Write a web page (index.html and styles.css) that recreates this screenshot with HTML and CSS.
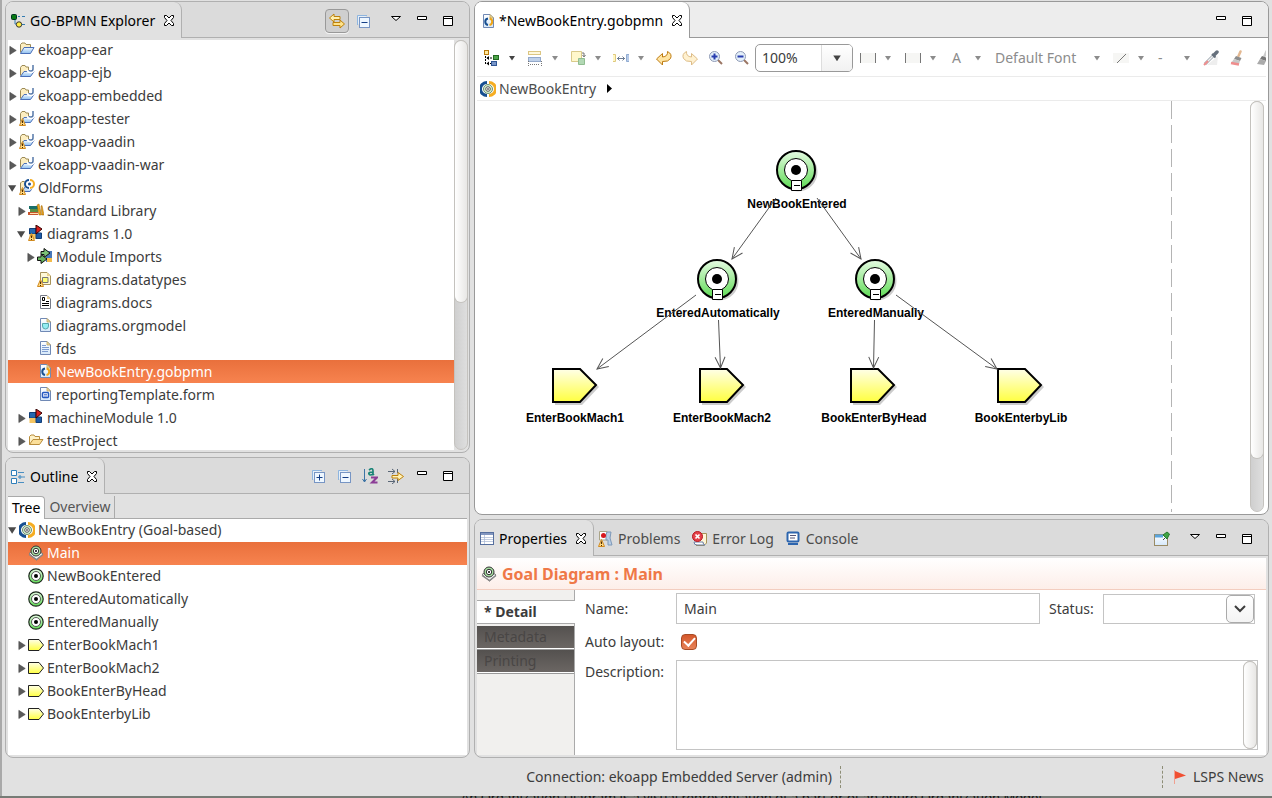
FILE: index.html
```html
<!DOCTYPE html>
<html lang="en">
<head>
<meta charset="utf-8">
<title>GO-BPMN Explorer</title>
<link rel="stylesheet" href="styles.css">
</head>
<body>
<svg class="sprite" aria-hidden="true">
  <defs>
    <linearGradient id="green" x1="0" y1="0" x2="0" y2="1"><stop offset="0" stop-color="#e6fbe3"/><stop offset="1" stop-color="#5fdb55"/></linearGradient>
    <linearGradient id="yellow" x1="0" y1="0" x2="0" y2="1"><stop offset="0" stop-color="#ffffe8"/><stop offset="1" stop-color="#ffff40"/></linearGradient>
    <linearGradient id="blue" x1="0" y1="0" x2="0" y2="1"><stop offset="0" stop-color="#eef7ff"/><stop offset="1" stop-color="#8fc0f0"/></linearGradient>
    <linearGradient id="sheet" x1="0" y1="0" x2="0" y2="1"><stop offset="0" stop-color="#fff"/><stop offset="1" stop-color="#d5e8fa"/></linearGradient>
  </defs>
  <symbol id="open" viewBox="0 0 12 16"><path d="M0 5H9L4.500 12Z" fill="#4a4a4a"/></symbol>
  <symbol id="closed" viewBox="0 0 12 16"><path d="M2 4V13L9 8.500Z" fill="#5a5a5a" stroke="#444" stroke-width=".6"/></symbol>
  <symbol id="folder" viewBox="0 0 16 16"><path d="M1.500 11.500V3.500L3 2H6L7 3.500H11.500V6" fill="#fdeec0" stroke="#9c8a55"/><path d="M1.500 12.500 5 6.500H15L11.500 12.500Z" fill="url(#blue)" stroke="#4a6fb8"/></symbol>
  <symbol id="folderj" viewBox="0 0 16 16"><path d="M1.500 11.500V3.500L3 1.500H6L7 3H9.500V7" fill="#fdeec0" stroke="#9c8a55"/><path d="M1.500 12.500 5 7.500H15L11.500 12.500Z" fill="url(#blue)" stroke="#4a6fb8"/><path d="M14 1V5Q14 7.500 11.500 7.500T9.500 6" fill="none" stroke="#fff" stroke-width="3.500"/><path d="M14 1V5Q14 7 12 7T10 6" fill="none" stroke="#5577a8" stroke-width="1.500"/></symbol>
  <symbol id="warn" viewBox="0 0 16 16"><path d="M3.500 8.500 6.500 15.500H.5Z" fill="#ffd982" stroke="#d08a20" stroke-linejoin="round"/><path d="M3.500 10.500V13M3.500 14V15" stroke="#4b2c00"/></symbol>
  <symbol id="folderw" viewBox="0 0 16 16"><use href="#folderj"/><use href="#warn"/></symbol>
  <symbol id="ring" viewBox="0 0 16 16"><path d="M7 1.500A6.500 6.500 0 0 0 7 14.500" fill="none" stroke="#174f91" stroke-width="3"/><path d="M9 1.500A6.500 6.500 0 0 1 9 14.500" fill="none" stroke="#f5ad22" stroke-width="3"/></symbol>
  <symbol id="project" viewBox="0 0 16 16"><path d="M1.500 12V4L3 2.500H7V12Z" fill="#fdeec0" stroke="#9c8a55"/><path d="M3 12.500 6 8H14L11 12.500Z" fill="#b8d8f5" stroke="#4a6fb8"/><circle cx="10.500" cy="5" r="5.500" fill="#fff"/><path d="M10 1A4 4 0 0 0 10 9" fill="none" stroke="#174f91" stroke-width="2"/><path d="M11 1A4 4 0 0 1 11 9" fill="none" stroke="#f5ad22" stroke-width="2"/><circle cx="10.500" cy="5" r="1.500" fill="#174f91"/><use href="#warn"/></symbol>
  <symbol id="books" viewBox="0 0 16 16"><path d="M1 4H10V7H1Z" fill="#19706a"/><path d="M2 7H10V10H2Z" fill="#5c8f43"/><path d="M0 10H10V13H0Z" fill="#c7552b"/><path d="M2 11.500H10" stroke="#ffe0b0"/><path d="M9 3 11 2 13.500 13H11ZM13 4 14 3.500 16 13H14Z" fill="#eca51f" stroke="#9c6206" stroke-width=".5"/></symbol>
  <symbol id="module" viewBox="0 0 16 16"><path d="M1.500 3.500H8V9H1.500Z" fill="#2467b0" stroke="#123e78"/><path d="M1.500 9H8V14H1.500Z" fill="#f5c561"/><path d="M8 8H13.500V13.500H8Z" fill="#1d5aa7" stroke="#123e78"/><path d="M8 0 14 4 8 9Z" fill="#d61f1f" stroke="#300"/></symbol>
  <symbol id="modulew" viewBox="0 0 16 16"><use href="#module"/><use href="#warn"/></symbol>
  <symbol id="imports" viewBox="0 0 16 16"><path d="M9 3H15V14H9Z" fill="#4777b8"/><path d="M10 10H15V14H10Z" fill="#f3bb4a"/><path d="M4 3.500H7V.5L13 5 7 9.500V6.500H4Z" fill="#7cc276" stroke="#111"/><path d="M.5 9H4V6.500L10 11 4 15.500V12.500H.5Z" fill="#66b35f" stroke="#111"/></symbol>
  <symbol id="page" viewBox="0 0 16 16"><path d="M3.500 1.500H10L13.500 5V14.500H3.500Z" fill="url(#sheet)" stroke="#7089b5"/><path d="M10 1.500V5H13.500Z" fill="#f5e0a0" stroke="#b29a5a" stroke-width=".7"/></symbol>
  <symbol id="datatypes" viewBox="0 0 16 16"><path d="M3.500 1.500H10L13.500 5V13.500H3.500Z" fill="#fff9d8" stroke="#a8935a"/><path d="M5.500 6.500H11V11.500H5.500Z" fill="#ffff74" stroke="#777"/><path d="M10 1.500V5H13.500Z" fill="#edd28c"/><use href="#warn"/></symbol>
  <symbol id="docs" viewBox="0 0 16 16"><path d="M3.500 1.500H10L13.500 5V14.500H3.500Z" fill="#fff" stroke="#777b87"/><path d="M5.500 3.500V6.500H7.500V3.500ZM9 7.500H12M5 9.500H12M5 11.500H12" fill="none" stroke="#000"/><path d="M10 1.500V5H13.500Z" fill="#edd28c"/></symbol>
  <symbol id="orgmodel" viewBox="0 0 16 16"><use href="#page"/><path d="M5.500 6.500H11.500V9Q11.500 12 8.500 12T5.500 9Z" fill="#93edf2" stroke="#56a7ad"/></symbol>
  <symbol id="text" viewBox="0 0 16 16"><use href="#page"/><path d="M5 5.500H9M5 7.500H12M5 9.500H12M5 11.500H11" stroke="#7d9cd0"/></symbol>
  <symbol id="gobpmn" viewBox="0 0 16 16"><use href="#page"/><path d="M8 5.500A3.300 3.300 0 0 0 8 12" fill="none" stroke="#174f91" stroke-width="2"/><path d="M9.500 5.500A3.300 3.300 0 0 1 9.500 12" fill="none" stroke="#f0a618" stroke-width="2"/></symbol>
  <symbol id="form" viewBox="0 0 16 16"><use href="#page"/><rect x="5.500" y="6.500" width="6" height="5" rx="1" fill="#fff" stroke="#2459c0" stroke-width="1.500"/><path d="M7 8.500H10M7 10H10" stroke="#2459c0" stroke-width=".7"/></symbol>
  <symbol id="plainfolder" viewBox="0 0 16 16"><path d="M1.500 12.500V4.500L3 3H6L7 4.500H11.500V7" fill="#fff2c8" stroke="#b98d3c"/><path d="M1.500 12.500 5 7.500H15L11.500 12.500Z" fill="#fbdf9a" stroke="#b98d3c"/></symbol>
  <symbol id="goalmodel" viewBox="0 0 16 16"><use href="#ring"/><circle cx="8" cy="8" r="4.500" fill="#d4efd0" stroke="#6f8f6f"/><circle cx="8" cy="8" r="2.300" fill="#fff" stroke="#555"/><circle cx="8" cy="8" r=".8"/></symbol>
  <symbol id="goal" viewBox="0 0 16 16"><circle cx="8" cy="8" r="7.200" fill="url(#green)" stroke="#1b281b" stroke-width="1.200"/><circle cx="8" cy="8" r="4.500" fill="#fff" stroke="#333" stroke-width=".8"/><circle cx="8" cy="8" r="2"/></symbol>
  <symbol id="task" viewBox="0 0 16 16"><path d="M.5 2.500H11L15.500 8 11 13.500H.5Z" fill="url(#yellow)" stroke="#222"/></symbol>
  <symbol id="goaldiagram" viewBox="0 0 16 16"><path d="M1 8.500 8 4 15 9 8.500 15Z" fill="#f6f6f6" stroke="#777"/><path d="M1 9.500 8.500 14.500 15 9.500" fill="none" stroke="#888" stroke-width="1.500"/><circle cx="8" cy="6" r="5" fill="#a7dfa2" stroke="#333"/><circle cx="8" cy="6" r="2.700" fill="#fff" stroke="#333"/><circle cx="8" cy="6" r="1"/></symbol>
  <symbol id="explorer" viewBox="0 0 16 16"><path d="M4 6V11H7M7 3.500H9M11 3.500H14M10 11.500H14" stroke="#347bb0" fill="none"/><rect x=".5" y="1.500" width="5" height="5" rx="1" fill="#087a14" stroke="#032"/><circle cx="8" cy="11.500" r="2.700" fill="#ffec45" stroke="#333"/></symbol>
  <symbol id="outline" viewBox="0 0 16 16"><path d="M.5 1.500H5.500V6.500H.5ZM.5 9.500H5.500V14.500H.5ZM8 7H10V9H8Z" fill="#fff" stroke="#2f7fba"/><path d="M7 3.500H13M11 8H14M7 13.500H13" stroke="#4a8fc2"/></symbol>
  <symbol id="close" viewBox="0 0 12 12"><path d="M1.500.5H3.500L6 3 8.500.5H10.500V2.500L8 5.500 10.500 8.500V10.500H8.500L6 8 3.500 10.500H1.500V8.500L4 5.500 1.500 2.500Z" fill="#fff" stroke="#000"/></symbol>
  <symbol id="link" viewBox="0 0 16 16"><path d="M.5 5 5 1V3.500H11V6.500H5V9Z" fill="#fff0b0" stroke="#bd810b"/><path d="M15.500 11 11 7V9.500H4V12.500H11V15Z" fill="#ffe38a" stroke="#bd810b"/></symbol>
  <symbol id="collapse" viewBox="0 0 16 16"><path d="M2.500 12V2.500H12" fill="#e7f0f8" stroke="#8eb5df"/><rect x="4.500" y="4.500" width="10" height="10" fill="#eef7ff" stroke="#7795c4"/><path d="M6.500 9.500H12.500" stroke="#153f86"/></symbol>
  <symbol id="expand" viewBox="0 0 16 16"><use href="#collapse"/><path d="M9.500 6.500V12.500" stroke="#153f86"/></symbol>
  <symbol id="menu" viewBox="0 0 16 16"><path d="M3.500 3.500H12.500L8 7.500Z" fill="#fff" stroke="#000"/></symbol>
  <symbol id="min" viewBox="0 0 16 16"><path d="M3.500 3.500H12.500V6.500H3.500Z" fill="#fff" stroke="#000"/></symbol>
  <symbol id="max" viewBox="0 0 16 16"><path d="M3.500 3.500H12.500V12.500H3.500ZM3.500 5.500H12.500" fill="#fff" stroke="#000"/></symbol>
  <symbol id="sort" viewBox="0 0 16 16"><path d="M2.500 1V14M.5 11 2.500 14 4.500 11" fill="none" stroke="#3d74a5"/><path d="M7 2Q11-1 11 3V7M11 4Q6 4 7 6T11 6L12 7" fill="none" stroke="#188476" stroke-width="1.700"/><path d="M9 9.500H15L10 14.500H15.500" fill="none" stroke="#8c3d97" stroke-width="2"/></symbol>
  <symbol id="filter" viewBox="0 0 16 16"><path d="M0 3.500H7M4 1 7 3.500 4 6M9.500 1V5M0 13.500H7M4 11 7 13.500 4 16M9.500 11V15" fill="none" stroke="#596676"/><path d="M4 7.500H10V4.500L15.500 8.500 10 12.500V10H4Z" fill="#fff3b8" stroke="#bd810b"/></symbol>
  <symbol id="drop" viewBox="0 0 8 8"><path d="M1 2H7L4 6.500Z" fill="currentColor"/></symbol>
  <symbol id="layout" viewBox="0 0 16 16"><rect x=".5" y=".5" width="4" height="4" fill="#ffe9a0" stroke="#b97a0b"/><path d="M1.500 6V15M3 8H9M3 13.500H7" stroke="#000" stroke-dasharray="2 1"/><path d="M5 6 2.500 8 5 10ZM5 11.500 2.500 13.500 5 15.500Z"/><rect x="9.500" y="5.500" width="5" height="4" fill="#4ca449" stroke="#21681f"/><rect x="7.500" y="11.500" width="5" height="4" fill="#7895c8" stroke="#315694"/></symbol>
  <symbol id="align" viewBox="0 0 16 16"><rect x="1.500" y="1.500" width="12" height="3" fill="#fff8dc" stroke="#dcc682"/><rect x="1.500" y="7.500" width="12" height="4" fill="#bfd1ea" stroke="#94a9ca"/><path d="M1.500 11V16M14.500 11V16M3 14.500H13" stroke="#777" stroke-dasharray="1 1"/></symbol>
  <symbol id="arrange" viewBox="0 0 16 16"><path d="M1.500 1.500H11.500V11.500H1.500Z" fill="#fff8cc" stroke="#d9ca8b"/><path d="M12 3H14V6M12.500 5 14 7 15.500 5" fill="none" stroke="#777"/><path d="M8.500 8.500H14.500V14.500H8.500Z" fill="#b2d8b4" stroke="#90bd91"/></symbol>
  <symbol id="space" viewBox="0 0 16 16"><path d="M0 4.500H2.500V11.500H0" fill="#fff6c5" stroke="#dfca7d"/><path d="M16 4.500H13.500V11.500H16" fill="#b6cae8" stroke="#91acd2"/><path d="M4 8.500H12M6.500 6.500 4.500 8.500 6.500 10.500M9.500 6.500 11.500 8.500 9.500 10.500" fill="none" stroke="#6c7c93"/></symbol>
  <symbol id="undo" viewBox="0 0 16 16"><path d="M.5 9 6.500 3.500V7Q12 6.500 11.500 1.500 16.500 4 14.500 8.500 12.500 12 6.500 11.500V15Z" fill="#ffe5a3" stroke="#bd7b12"/></symbol>
  <symbol id="zoomin" viewBox="0 0 16 16"><path d="M10 10 14 14" stroke="#9b7664" stroke-width="2"/><circle cx="6.500" cy="6.500" r="5" fill="#e3effa" stroke="#8f9ab5"/><path d="M3.500 6.500H9.500M6.500 3.500V9.500" stroke="#273cae" stroke-width="2"/></symbol>
  <symbol id="zoomout" viewBox="0 0 16 16"><path d="M10 10 14 14" stroke="#9b7664" stroke-width="2"/><circle cx="6.500" cy="6.500" r="5" fill="#e3effa" stroke="#8f9ab5"/><path d="M3.500 6.500H9.500" stroke="#273cae" stroke-width="2"/></symbol>
  <symbol id="fill" viewBox="0 0 16 16"><path d="M0 3H16V13H0Z" fill="#f6f6f4"/><path d="M.5 3V13M15.500 3V13" stroke="#777"/></symbol>
  <symbol id="line" viewBox="0 0 16 16"><path d="M0 3H16V13H0Z" fill="#f6f6f4"/><path d="M4 13 13 4" stroke="#777"/></symbol>
  <symbol id="pipette" viewBox="0 0 16 16"><path d="M4 15H14L15 6Z" fill="#eee"/><path d="M2 14 10 6" stroke="#98a3ac" stroke-width="3"/><path d="M2 14 10 6" stroke="#f2f2f2" stroke-width="1.500"/><path d="M1 15 5 11" stroke="#ef8d8d" stroke-width="2"/><path d="M9 4 12.500 7.500" stroke="#66707c" stroke-width="2"/><path d="M11 5 14 2" stroke="#66707c" stroke-width="3.500" stroke-linecap="round"/></symbol>
  <symbol id="brush" viewBox="0 0 16 16"><path d="M9.500 6 11.500 1.500" stroke="#e3b891" stroke-width="2.500" stroke-linecap="round"/><path d="M7 6 12.500 8 11 11 5 9Z" fill="#8d8d8d"/><path d="M5 9 11 11 10 14 2 13Z" fill="#c8c8c8"/><path d="M2 13 10 14.500" stroke="#ef8d8d" stroke-width="2.500"/></symbol>
  <symbol id="graybrush" viewBox="0 0 16 16"><path d="M9.500 6 11.500 1.500" stroke="#ccc" stroke-width="2.500" stroke-linecap="round"/><path d="M7 6 12.500 8 11 11 5 9Z" fill="#777"/><path d="M5 9 11 11 9 15 2 14Z" fill="#aaa"/></symbol>
  <symbol id="properties" viewBox="0 0 16 16"><rect x=".5" y="1.500" width="13" height="12" fill="#fff" stroke="#566f9e"/><path d="M1 3H13" stroke="#8296bf" stroke-width="2"/><path d="M4.500 4V13M1 6.500H13M1 8.500H13M1 10.500H13" stroke="#a8b7d4" stroke-width=".7"/></symbol>
  <symbol id="problems" viewBox="0 0 16 16"><path d="M1.500.5H9V9H1.500Z" fill="#fff" stroke="#aaa487"/><path d="M9 1H13L12 7 14 14H10V9H8V4Z" fill="#b9cee5" stroke="#7d98b8"/><circle cx="5.500" cy="4.500" r="2.500" fill="#d71920"/><use href="#warn"/></symbol>
  <symbol id="errorlog" viewBox="0 0 16 16"><path d="M5.500 2.500H14.500V12L12 14.500H4" fill="#fff6d7" stroke="#a69357"/><path d="M5 14Q2 14 2 11H11Q11 14 13 14Z" fill="#fff" stroke="#6b7fa3"/><circle cx="5.500" cy="5.500" r="5" fill="#e34149" stroke="#b5171f"/><path d="M3.500 3.500 7.500 7.500M7.500 3.500 3.500 7.500" stroke="#fff" stroke-width="1.700"/></symbol>
  <symbol id="console" viewBox="0 0 16 16"><rect x="1.500" y="1.500" width="11" height="9" rx="1" fill="#fff" stroke="#2d65ae" stroke-width="2"/><path d="M4 4.500H10M4 7H9" stroke="#557"/><path d="M2 13H12" stroke="#2d65ae" stroke-width="2"/></symbol>
  <symbol id="pin" viewBox="0 0 16 16"><rect x=".5" y="3.500" width="13" height="11" fill="url(#sheet)" stroke="#9a8b65"/><path d="M1 5H9" stroke="#5aa4dc" stroke-width="3"/><path d="M9 9 12 6" stroke="#444"/><path d="M9 4 13 1 15.500 3 13 8Z" fill="#3fa345" stroke="#267a2d"/></symbol>
  <symbol id="flag" viewBox="0 0 16 16"><path d="M2.500 1V15" stroke="#f0a090"/><path d="M3 2 14 6.500 3 10Z" fill="#f04f32"/></symbol>
</svg>

<div class="workbench">
  <main class="workspace">
    <div class="column">
      <section class="panel explorer">
        <header class="tabbar">
          <div class="tab active"><svg class="icon"><use href="#explorer"/></svg><span>GO-BPMN Explorer</span><button class="close" aria-label="Close"><svg><use href="#close"/></svg></button></div>
          <div class="actions">
            <button class="tool pressed" aria-label="Link with editor"><svg class="icon"><use href="#link"/></svg></button>
            <button class="tool" aria-label="Collapse all"><svg class="icon"><use href="#collapse"/></svg></button>
            <button class="tool menu" aria-label="View menu"><svg class="icon"><use href="#menu"/></svg></button>
            <button class="tool" aria-label="Minimize"><svg class="icon"><use href="#min"/></svg></button>
            <button class="tool" aria-label="Maximize"><svg class="icon"><use href="#max"/></svg></button>
          </div>
        </header>
        <div class="scroll-area">
          <ul class="tree clipped">
            <li><svg class="twisty"><use href="#closed"/></svg><svg class="icon"><use href="#folder"/></svg>ekoapp-ear</li>
            <li><svg class="twisty"><use href="#closed"/></svg><svg class="icon"><use href="#folderj"/></svg>ekoapp-ejb</li>
            <li><svg class="twisty"><use href="#closed"/></svg><svg class="icon"><use href="#folderj"/></svg>ekoapp-embedded</li>
            <li><svg class="twisty"><use href="#closed"/></svg><svg class="icon"><use href="#folderw"/></svg>ekoapp-tester</li>
            <li><svg class="twisty"><use href="#closed"/></svg><svg class="icon"><use href="#folderw"/></svg>ekoapp-vaadin</li>
            <li><svg class="twisty"><use href="#closed"/></svg><svg class="icon"><use href="#folderj"/></svg>ekoapp-vaadin-war</li>
            <li><svg class="twisty"><use href="#open"/></svg><svg class="icon"><use href="#project"/></svg>OldForms</li>
            <li class="level-1"><svg class="twisty"><use href="#closed"/></svg><svg class="icon"><use href="#books"/></svg>Standard Library</li>
            <li class="level-1"><svg class="twisty"><use href="#open"/></svg><svg class="icon"><use href="#modulew"/></svg>diagrams 1.0</li>
            <li class="level-2"><svg class="twisty"><use href="#closed"/></svg><svg class="icon"><use href="#imports"/></svg>Module Imports</li>
            <li class="level-2"><svg class="twisty"></svg><svg class="icon"><use href="#datatypes"/></svg>diagrams.datatypes</li>
            <li class="level-2"><svg class="twisty"></svg><svg class="icon"><use href="#docs"/></svg>diagrams.docs</li>
            <li class="level-2"><svg class="twisty"></svg><svg class="icon"><use href="#orgmodel"/></svg>diagrams.orgmodel</li>
            <li class="level-2"><svg class="twisty"></svg><svg class="icon"><use href="#text"/></svg>fds</li>
            <li class="level-2 selected"><svg class="twisty"></svg><svg class="icon"><use href="#gobpmn"/></svg>NewBookEntry.gobpmn</li>
            <li class="level-2"><svg class="twisty"></svg><svg class="icon"><use href="#form"/></svg>reportingTemplate.form</li>
            <li class="level-1"><svg class="twisty"><use href="#closed"/></svg><svg class="icon"><use href="#module"/></svg>machineModule 1.0</li>
            <li class="level-1"><svg class="twisty"><use href="#closed"/></svg><svg class="icon"><use href="#plainfolder"/></svg>testProject</li>
          </ul>
          <div class="scrollbar"><div class="thumb" style="height:64%"></div></div>
        </div>
      </section>

      <section class="panel outline">
        <header class="tabbar">
          <div class="tab active"><svg class="icon"><use href="#outline"/></svg><span>Outline</span><button class="close" aria-label="Close"><svg><use href="#close"/></svg></button></div>
          <div class="actions">
            <button class="tool" aria-label="Expand all"><svg class="icon"><use href="#expand"/></svg></button>
            <button class="tool" aria-label="Collapse all"><svg class="icon"><use href="#collapse"/></svg></button>
            <button class="tool" aria-label="Sort"><svg class="icon"><use href="#sort"/></svg></button>
            <button class="tool" aria-label="Link"><svg class="icon"><use href="#filter"/></svg></button>
            <button class="tool" aria-label="Minimize"><svg class="icon"><use href="#min"/></svg></button>
            <button class="tool" aria-label="Maximize"><svg class="icon"><use href="#max"/></svg></button>
          </div>
        </header>
        <nav class="subtabs"><button class="subtab current">Tree</button><button class="subtab">Overview</button></nav>
        <ul class="tree">
          <li><svg class="twisty"><use href="#open"/></svg><svg class="icon"><use href="#goalmodel"/></svg>NewBookEntry (Goal-based)</li>
          <li class="level-1 selected"><svg class="twisty"></svg><svg class="icon"><use href="#goaldiagram"/></svg>Main</li>
          <li class="level-1"><svg class="twisty"></svg><svg class="icon"><use href="#goal"/></svg>NewBookEntered</li>
          <li class="level-1"><svg class="twisty"></svg><svg class="icon"><use href="#goal"/></svg>EnteredAutomatically</li>
          <li class="level-1"><svg class="twisty"></svg><svg class="icon"><use href="#goal"/></svg>EnteredManually</li>
          <li class="level-1"><svg class="twisty"><use href="#closed"/></svg><svg class="icon"><use href="#task"/></svg>EnterBookMach1</li>
          <li class="level-1"><svg class="twisty"><use href="#closed"/></svg><svg class="icon"><use href="#task"/></svg>EnterBookMach2</li>
          <li class="level-1"><svg class="twisty"><use href="#closed"/></svg><svg class="icon"><use href="#task"/></svg>BookEnterByHead</li>
          <li class="level-1"><svg class="twisty"><use href="#closed"/></svg><svg class="icon"><use href="#task"/></svg>BookEnterbyLib</li>
        </ul>
      </section>
    </div>

    <div class="column">
      <section class="panel editor">
        <header class="tabbar">
          <div class="tab active"><svg class="icon"><use href="#gobpmn"/></svg><span>*NewBookEntry.gobpmn</span><button class="close" aria-label="Close"><svg><use href="#close"/></svg></button></div>
          <div class="actions">
            <button class="tool" aria-label="Minimize"><svg class="icon"><use href="#min"/></svg></button>
            <button class="tool" aria-label="Maximize"><svg class="icon"><use href="#max"/></svg></button>
          </div>
        </header>
        <div class="toolbar">
          <button class="tool split dark" aria-label="Layout"><svg class="icon"><use href="#layout"/></svg><svg class="drop"><use href="#drop"/></svg></button>
          <button class="tool split" aria-label="Align"><svg class="icon"><use href="#align"/></svg><svg class="drop"><use href="#drop"/></svg></button>
          <button class="tool split" aria-label="Arrange"><svg class="icon"><use href="#arrange"/></svg><svg class="drop"><use href="#drop"/></svg></button>
          <button class="tool split" aria-label="Spacing"><svg class="icon"><use href="#space"/></svg><svg class="drop"><use href="#drop"/></svg></button>
          <div class="button-row">
            <button class="tool" aria-label="Undo"><svg class="icon"><use href="#undo"/></svg></button>
            <button class="tool redo" aria-label="Redo"><svg class="icon"><use href="#undo"/></svg></button>
            <button class="tool" aria-label="Zoom in"><svg class="icon"><use href="#zoomin"/></svg></button>
            <button class="tool" aria-label="Zoom out"><svg class="icon"><use href="#zoomout"/></svg></button>
          </div>
          <div class="zoom"><select aria-label="Zoom level"><option>100%</option></select><span class="zoom-arrow"><svg><use href="#drop"/></svg></span></div>
          <button class="tool format" aria-label="Fill colour"><svg class="icon"><use href="#fill"/></svg><svg class="drop"><use href="#drop"/></svg></button>
          <button class="tool format" aria-label="Line colour"><svg class="icon"><use href="#fill"/></svg><svg class="drop"><use href="#drop"/></svg></button>
          <button class="tool format letter"><span>A</span><svg class="drop"><use href="#drop"/></svg></button>
          <button class="tool format font"><span>Default Font</span><svg class="drop"><use href="#drop"/></svg></button>
          <button class="tool format" aria-label="Line style"><svg class="icon"><use href="#line"/></svg><svg class="drop"><use href="#drop"/></svg></button>
          <button class="tool format width"><span>-</span><svg class="drop"><use href="#drop"/></svg></button>
          <div class="button-row">
            <button class="tool" aria-label="Pick format"><svg class="icon"><use href="#pipette"/></svg></button>
            <button class="tool" aria-label="Apply format"><svg class="icon"><use href="#brush"/></svg></button>
            <button class="tool" aria-label="Apply default format"><svg class="icon"><use href="#graybrush"/></svg></button>
          </div>
        </div>
        <nav class="breadcrumb"><svg class="icon"><use href="#goalmodel"/></svg><a href="#">NewBookEntry</a><svg class="crumb"><path d="M1 0V9L6 4.500Z"/></svg></nav>
        <div class="scroll-area">
          <svg class="canvas" role="img" aria-label="Goal diagram Main">
            <defs>
              <marker id="head" orient="auto" markerUnits="userSpaceOnUse" markerWidth="12" markerHeight="12" overflow="visible"><path d="M-11-5L0 0L-11 5" class="edge"/></marker>
              <g id="goal-node"><circle cx="2" cy="2" r="19.500" fill="#ccc"/><circle r="19" fill="url(#green)" stroke="#000" stroke-width="2"/><circle r="11.500" fill="#fff" stroke="#000"/><circle r="5"/><path d="M-4.500 10.500H5.500V20.500H-4.500Z" fill="#fff" stroke="#000"/><path d="M-2 15.500H4" stroke="#000"/></g>
              <g id="task-node"><path d="M3 3H30L47 19 30 37H3Z" fill="#ccc"/><path d="M1 1H28L44 17 28 34H1Z" fill="url(#yellow)" stroke="#000" stroke-width="2"/></g>
            </defs>
            <path d="M694.500 0V412" stroke="#b4b4b4" stroke-dasharray="18 6"/>
            <g transform="translate(-477 -101)">
              <use href="#goal-node" x="796" y="170"/><use href="#goal-node" x="717" y="279"/><use href="#goal-node" x="875" y="279"/>
              <use href="#task-node" x="552" y="368"/><use href="#task-node" x="699" y="368"/><use href="#task-node" x="850" y="368"/><use href="#task-node" x="997" y="368"/>
              <g class="node-label">
                <text x="797" y="208">NewBookEntered</text><text x="718" y="317">EnteredAutomatically</text><text x="876" y="317">EnteredManually</text>
                <text x="575" y="422">EnterBookMach1</text><text x="722" y="422">EnterBookMach2</text><text x="874" y="422">BookEnterByHead</text><text x="1021" y="422">BookEnterbyLib</text>
              </g>
              <g class="edge">
                <path marker-end="url(#head)" d="M776 198L732 259"/><path marker-end="url(#head)" d="M817 198L861 259"/><path marker-end="url(#head)" d="M696 295L597 369"/><path marker-end="url(#head)" d="M718.500 320L720.500 368"/><path marker-end="url(#head)" d="M874.500 320L873.500 368"/><path marker-end="url(#head)" d="M896 295L997 369"/>
              </g>
            </g>
          </svg>
          <div class="scrollbar"><div class="thumb" style="height:87%"></div></div>
        </div>
      </section>

      <section class="panel properties">
        <header class="tabbar">
          <div class="tab active"><svg class="icon"><use href="#properties"/></svg><span>Properties</span><button class="close" aria-label="Close"><svg><use href="#close"/></svg></button></div>
          <div class="actions">
            <div class="tab-list">
              <button class="tab"><svg class="icon"><use href="#problems"/></svg>Problems</button>
              <button class="tab"><svg class="icon"><use href="#errorlog"/></svg>Error Log</button>
              <button class="tab"><svg class="icon"><use href="#console"/></svg>Console</button>
            </div>
            <button class="tool" aria-label="Pin"><svg class="icon"><use href="#pin"/></svg></button>
            <button class="tool menu" aria-label="View menu"><svg class="icon"><use href="#menu"/></svg></button>
            <button class="tool" aria-label="Minimize"><svg class="icon"><use href="#min"/></svg></button>
            <button class="tool" aria-label="Maximize"><svg class="icon"><use href="#max"/></svg></button>
          </div>
        </header>
        <h1 class="title"><svg class="icon"><use href="#goaldiagram"/></svg>Goal Diagram : Main</h1>
        <div class="sheet">
          <nav class="sections">
            <button class="section current">* Detail</button>
            <button class="section">Metadata</button>
            <button class="section">Printing</button>
          </nav>
          <form class="form">
            <label for="name">Name:</label><input id="name" type="text" value="Main">
            <label for="status">Status:</label>
            <div class="status-field"><select id="status"><option></option></select><span class="status-arrow"><svg><path d="M2 2L7 7L12 2"/></svg></span></div>
            <label for="auto">Auto layout:</label><input class="check" id="auto" type="checkbox" checked>
            <label class="top" for="desc">Description:</label>
            <div class="area"><textarea id="desc"></textarea><div class="scrollbar"><div class="thumb" style="height:100%"></div></div></div>
          </form>
        </div>
      </section>
    </div>
  </main>
  <footer class="statusbar">
    <span class="connection">Connection: ekoapp Embedded Server (admin)</span>
    <span class="news"><svg class="icon"><use href="#flag"/></svg>LSPS News</span>
  </footer>
</div>
<div class="behind">An Organization Diagram is a visual representation of a part or of an entire Organization Model</div>
</body>
</html>
```

FILE: styles.css
```css
* { box-sizing: border-box; }
body {
  margin: 0;
  min-height: 100vh;
  display: flex;
  flex-direction: column;
  background: #e1e1e1;
  color: #3c3c3c;
  font: 14px/22px "Noto Sans", "Open Sans", sans-serif;
  overflow: hidden;
}
button, input, select, textarea { font: inherit; color: inherit; margin: 0; }
button { border: 0; padding: 0; background: none; display: flex; align-items: center; }
svg { display: block; flex: none; }
.sprite { position: absolute; width: 0; height: 0; }
.icon { width: 16px; height: 16px; }

.workbench { flex: 1; display: flex; flex-direction: column; border-left: 2px solid #a9a9a9; }
.workspace { flex: 1; display: grid; grid-template-columns: 31fr 53fr; gap: 4px; padding: 1px 3px 0; }
.column { display: flex; flex-direction: column; gap: 4px; min-width: 0; }

.panel {
  display: flex;
  flex-direction: column;
  min-height: 0;
  overflow: hidden;
  border: 1px solid #b0b0b0;
  border-radius: 8px;
}
.explorer { flex: 452 1 0; }
.outline { flex: 301 1 0; }
.editor { flex: 515 1 0; background: #fff; border-color: #999; }
.properties { flex: 238 1 0; }

.tabbar { display: flex; flex: none; height: 36px; background: #dbdbdb; }
.tab { display: flex; align-items: center; gap: 4px; color: #4c4c4c; white-space: nowrap; }
.tab.active {
  gap: 3px;
  padding: 2px 6px 0 5px;
  color: #000;
  background: #e1e1e1;
  border-right: 1px solid #b0b0b0;
  border-top-right-radius: 8px;
}
.close { margin-left: 5px; }
.close svg { width: 12px; height: 12px; }
.actions {
  flex: 1;
  display: flex;
  align-items: center;
  justify-content: flex-end;
  gap: 10px;
  padding: 2px 13px 0 0;
  border-bottom: 1px solid #b0b0b0;
}
.menu { margin-left: 7px; }
.pressed { padding: 3px; margin-right: -4px; border: 1px solid #999; border-radius: 4px; background: #cfcfcf; box-shadow: 0 1px 0 #f4f4f4; }
.editor .tabbar { background: #ededed; }
.editor .tab.active { background: #fff; border-color: #999; }
.editor .actions { border-color: #999; }
.tab-list { display: flex; gap: 12px; margin-right: auto; padding-left: 4px; }

.scroll-area { flex: 1; display: flex; min-height: 0; margin: 2px 1px 2px 2px; }
.tree { list-style: none; margin: 0; padding: 0; background: #fff; flex: 1; min-width: 0; overflow: hidden; }
.tree li { display: flex; align-items: center; height: 23px; white-space: nowrap; }
.tree .icon { margin: 0 3px 1px 0; }
.clipped li:first-child { margin-top: -2px; }
.outline .tree { margin: 0 2px 2px; }
.twisty { width: 11px; height: 16px; }
.tree .level-1 { padding-left: 9px; }
.tree .level-2 { padding-left: 18px; }
.tree .selected { color: #fff; background: linear-gradient(#e9703c, #f7834f); }

.scrollbar { flex: none; width: 14px; border: 1px solid #c4c2be; border-radius: 7px; background: linear-gradient(90deg, #cfcfcf, #dedede); }
.thumb { border-radius: 7px; background: linear-gradient(90deg, #fff, #e8e7e5); box-shadow: 0 0 0 1px #c4c2be; }

.subtabs { display: flex; height: 23px; margin: 2px 2px 0; border-bottom: 1px solid #aaa; }
.subtab { padding: 0 4px; border-right: 1px solid #aaa; color: #555; }
.current.subtab { background: #fff; color: #000; border-top: 1px solid #aaa; height: 23px; border-top-right-radius: 4px; }

.toolbar { flex: none; display: flex; align-items: center; height: 39px; margin: 0 2px; padding: 1px 0 0 7px; border-bottom: 1px solid #ebebeb; overflow: hidden; color: #8c8c8c; }
.toolbar > * { flex: none; }
.drop { width: 8px; height: 8px; }
.split { width: 43px; gap: 8px; }
.dark .drop { color: #444; }
.button-row { display: flex; gap: 10px; }
.redo { transform: scaleX(-1); opacity: 0.5; }
.zoom { position: relative; width: 98px; height: 28px; margin: 0 7px 0 5px; }
.zoom select { appearance: none; width: 100%; height: 100%; padding: 0 6px; border: 1px solid #999; border-radius: 5px; background: #fff; color: #3c3c3c; }
.zoom-arrow { position: absolute; inset: 1px 1px 1px auto; width: 31px; display: flex; align-items: center; justify-content: center; border-left: 1px solid #ddd; border-radius: 0 4px 4px 0; background: linear-gradient(#fff, #f1f1f1); color: #444; pointer-events: none; }
.zoom-arrow svg { width: 10px; height: 10px; }
.format { width: 45px; gap: 8px; }
.letter { width: 45px; padding-left: 2px; gap: 13px; }
.font { width: 118px; gap: 17px; }
.width { gap: 20px; }

.breadcrumb { flex: none; display: flex; align-items: center; gap: 3px; height: 24px; margin: 0 2px; padding-left: 3px; border-bottom: 1px solid #ebebeb; }
.breadcrumb a { color: #4c4c4c; text-decoration: none; }
.crumb { width: 8px; height: 9px; margin-left: 7px; }
.editor .scroll-area { margin: 0 4px 2px 2px; }
.canvas { flex: 1; width: 0; height: auto; align-self: stretch; }
.edge { fill: none; stroke: #555; stroke-width: 1px; }
.node-label { font: bold 12px "Liberation Sans", Arial, sans-serif; text-anchor: middle; fill: #000; }

.title { flex: none; display: flex; align-items: center; gap: 5px; height: 32px; margin: 2px 2px 0; padding-left: 4px; border-bottom: 1px solid #f3cdbf; background: linear-gradient(#fff, #fdeee9); color: #ef7847; font-size: 16px; }
.sheet { flex: 1; display: flex; margin: 0 2px 2px; background: #fff; min-height: 0; }
.sections { flex: none; width: 98px; padding-top: 10px; background: #f1f0ee; border-right: 1px solid #aaa; }
.section { width: 97px; height: 22px; margin-bottom: 2px; padding-left: 7px; color: #494645; background: linear-gradient(#54514f, #6b6663); box-shadow: 0 1px 0 #fff, 0 2px 0 #999; }
.current.section { width: 98px; height: 24px; color: #3c3c3c; background: #fff; font-weight: bold; box-shadow: none; border: solid #aaa; border-width: 1px 0; }

.form { flex: 1; display: grid; grid-template-columns: 82px 1fr 48px 152px; grid-template-rows: 31px 36px 1fr; column-gap: 9px; align-items: center; padding: 3px 8px 5px 10px; min-width: 0; }
.form input[type="text"] { width: 100%; height: 31px; padding: 0 7px; border: 1px solid #c4c4c4; background: #fff; }
.status-field { position: relative; height: 30px; margin-right: 3px; margin-left: -3px; }
.status-field select { appearance: none; width: 100%; height: 100%; border: 1px solid #c4c4c4; border-radius: 0; background: #fff; }
.status-arrow { position: absolute; inset: 1px 1px 1px auto; width: 28px; display: flex; align-items: center; justify-content: center; border: 1px solid #aaa; border-radius: 5px; background: linear-gradient(#fff, #f4f4f4); pointer-events: none; }
.status-arrow svg { width: 14px; height: 9px; fill: none; stroke: #3c3c3c; stroke-width: 2px; }
.check { appearance: none; width: 16px; height: 16px; margin-left: 5px; border: 1px solid #a84b25; border-radius: 4px; background: linear-gradient(#d4572b, #e88358); grid-column: 2 / -1; display: grid; place-items: center; }
.check:checked::before { content: ""; width: 9px; height: 5px; margin-bottom: 3px; border: solid #fff; border-width: 0 0 2px 2px; transform: rotate(-48deg); }
.top { align-self: start; padding-top: 1px; }
.area { grid-column: 2 / -1; align-self: stretch; display: flex; border: 1px solid #c4c4c4; }
.area textarea { flex: 1; min-width: 0; height: 100%; border: 0; resize: none; background: #fff; outline: 0; }

.statusbar { flex: none; display: flex; justify-content: flex-end; align-items: center; height: 38px; padding-right: 6px; white-space: nowrap; }
.connection { padding-right: 8px; margin-right: 321px; border-right: 1px dashed #8d8d76; }
.news { display: flex; align-items: center; gap: 5px; width: 104px; padding-left: 9px; border-left: 1px dashed #8d8d76; }
.behind { flex: none; height: 2px; padding-left: 461px; overflow: hidden; background: #777c76; color: #111; font-size: 13px; line-height: 2px; white-space: nowrap; }
```
